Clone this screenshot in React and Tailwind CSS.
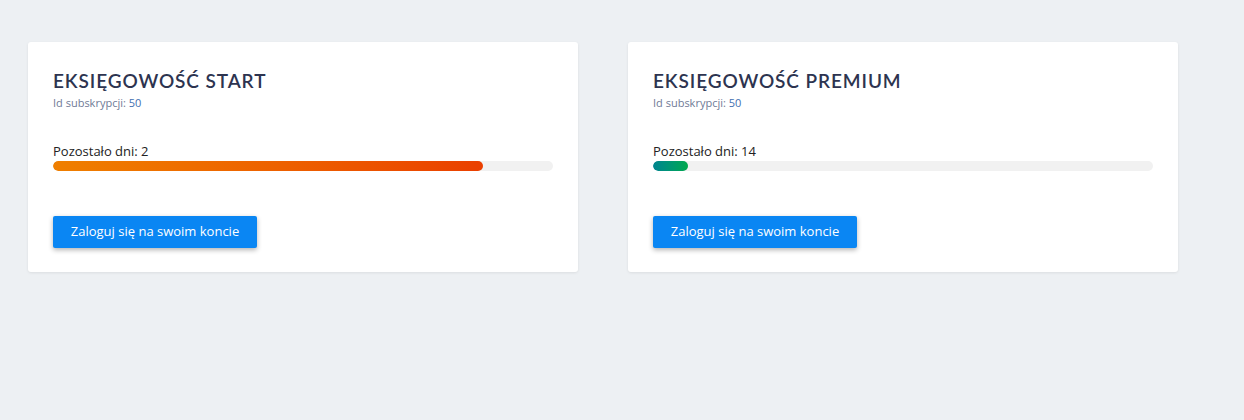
const plans = [
  { name: 'EKSIĘGOWOŚĆ START', id: 50, days: 2, pct: 86, bar: 'bg-gradient-to-r from-[#ef7f00] to-[#ea3f00]' },
  { name: 'EKSIĘGOWOŚĆ PREMIUM', id: 50, days: 14, pct: 7, bar: 'bg-gradient-to-r from-[#00848f] to-[#00a84b]' },
];

function PlanCard({ plan }) {
  return (
    <div className="w-[550px] h-[230px] bg-white rounded-[3px] shadow-[0_1px_3px_rgba(0,0,0,0.08)] px-[25px] pt-[27px]">
      <h2 className="text-[19px] leading-[24px] font-semibold text-[#2d3450] tracking-[0.9px] font-['Lato','Open_Sans',sans-serif]">
        {plan.name}
      </h2>
      <p className="text-[11px] leading-[14px] mt-[3px] text-[#6f7a96] font-['Open_Sans',sans-serif]">
        Id subskrypcji: <span className="text-[#3f6fb0]">{plan.id}</span>
      </p>
      <div className="mt-[33px] font-['Open_Sans',sans-serif]">
        <div className="text-[13px] leading-[16px] text-[#222]">Pozostało dni: {plan.days}</div>
        <div className="mt-[2px] w-[500px] h-[10px] rounded-full bg-[#f1f1f1] overflow-hidden">
          <div className={`h-full rounded-full ${plan.bar}`} style={{ width: `${plan.pct}%` }} />
        </div>
      </div>
      <button className="mt-[45px] h-[32px] w-[204px] bg-[#0a86f3] text-white text-[13px] font-['Open_Sans',sans-serif] rounded-[2px] shadow-[0_2px_5px_rgba(0,0,0,0.3)]">
        Zaloguj się na swoim koncie
      </button>
    </div>
  );
}

export default function App() {
  return (
    <div className="min-h-[420px] bg-[#edf0f3] pt-[42px] pl-[28px] flex gap-[50px]">
      {plans.map((p) => (
        <PlanCard key={p.name} plan={p} />
      ))}
    </div>
  );
}
